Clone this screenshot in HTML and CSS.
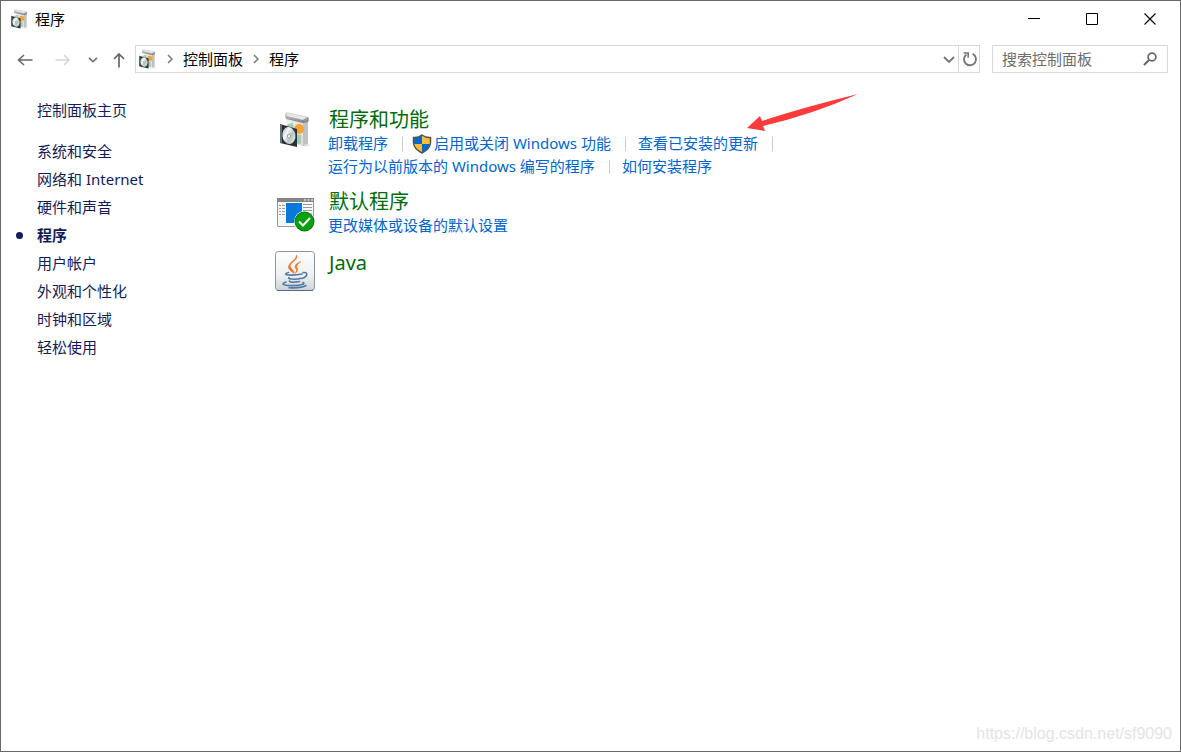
FILE: index.html
```html
<!DOCTYPE html>
<html lang="zh-CN">
<head>
<meta charset="utf-8">
<title>程序</title>
<link rel="stylesheet" href="styles.css">
</head>
<body>
<svg class="defs" aria-hidden="true">
  <defs>
    <linearGradient id="disc" x1="0" y1="0" x2="1" y2="1"><stop offset="0" stop-color="#a9b3b3"/><stop offset=".35" stop-color="#f6f8f8"/><stop offset=".6" stop-color="#bcc5c4"/><stop offset="1" stop-color="#eef1f0"/></linearGradient>
    <linearGradient id="box" x1="0" y1="0" x2="1" y2="0"><stop offset="0" stop-color="#f4f4f4"/><stop offset="1" stop-color="#dcdddd"/></linearGradient>
    <linearGradient id="lid" x1="0" y1="0" x2="0" y2="1"><stop offset="0" stop-color="#e2e2e3"/><stop offset="1" stop-color="#77797b"/></linearGradient>
    <linearGradient id="tile" x1="0" y1="0" x2="0" y2="1"><stop offset="0" stop-color="#fdfdfd"/><stop offset=".6" stop-color="#eff1f2"/><stop offset="1" stop-color="#cdd3d9"/></linearGradient>
    <symbol id="programs" viewBox="0 0 32 36">
      <path d="M6 5 23 9V34L6 30Z" fill="url(#box)"/>
      <path d="M23 9 28 8V32L23 34Z" fill="#bfc1c2"/>
      <path d="M25 32 31 33 24 35Z" fill="#dedede"/>
      <path d="M5 4Q5 1 7 0L28 5Q30 7 28 10L23 11 6 7Z" fill="url(#lid)"/>
      <path d="M7 1 27 5 23 8 7 4Z" fill="#e6e6e7"/>
      <path d="M13 11Q6 11 6 17L14 20Z" fill="#a5cbb2"/>
      <circle cx="19" cy="17" r="5" fill="#f5a535"/>
      <path d="M11 22 21 23V32L13 31Z" fill="#a5cbb2"/>
      <path d="M0 12 17 17V35L0 31Z" fill="#28323a"/>
      <path d="M0 12 2 13V31L0 31Z" fill="#65717a"/>
      <ellipse cx="9" cy="23.500" rx="6.500" ry="8.500" fill="url(#disc)" transform="rotate(-8 9 24)"/>
      <ellipse cx="9" cy="24" rx="2" ry="2.500" fill="#9aa4a8"/>
      <ellipse cx="9" cy="24" rx="1" ry="1.500" fill="#f7f8f8"/>
    </symbol>
  </defs>
</svg>
<div class="window">
  <header class="titlebar">
    <svg class="icon-small"><use href="#programs"/></svg>
    <h1 class="title">程序</h1>
    <div class="controls">
      <button class="control" aria-label="最小化"><svg width="12" height="12"><path d="M0 5.500H12" stroke="#000"/></svg></button>
      <button class="control" aria-label="最大化"><svg width="12" height="12"><path d="M.5.5H11.500V11.500H.5Z" stroke="#000" fill="none"/></svg></button>
      <button class="control" aria-label="关闭"><svg width="12" height="12"><path d="M.5.5 11.500 11.500M11.500.5.5 11.500" stroke="#000" stroke-width="1.100"/></svg></button>
    </div>
  </header>
  <nav class="navbar" aria-label="导航">
    <div class="history">
      <button class="nav-button" aria-label="后退"><svg width="16" height="12"><path d="M15.500 6H1.500M7 1 1.500 6 7 11" fill="none" stroke="#666" stroke-width="1.600"/></svg></button>
      <button class="nav-button" aria-label="前进" disabled><svg width="16" height="12"><path d="M.5 6H14M9 1 14 6 9 11" fill="none" stroke="#d6d6d6" stroke-width="1.600"/></svg></button>
      <button class="nav-button recent" aria-label="最近"><svg width="10" height="6"><path d="M1 .8 5 4.600 9 .8" fill="none" stroke="#777" stroke-width="1.700"/></svg></button>
      <button class="nav-button up" aria-label="向上"><svg width="12" height="16"><path d="M6 15.500V2M1 7 6 2 11 7" fill="none" stroke="#666" stroke-width="1.700"/></svg></button>
    </div>
    <div class="address">
      <svg class="icon-small"><use href="#programs"/></svg>
      <svg class="chevron" width="6" height="10"><path d="M1 1 5 5 1 9" fill="none" stroke="#777" stroke-width="1.500"/></svg>
      <a class="crumb" href="#">控制面板</a>
      <svg class="chevron" width="6" height="10"><path d="M1 1 5 5 1 9" fill="none" stroke="#777" stroke-width="1.500"/></svg>
      <a class="crumb" href="#">程序</a>
      <button class="drop" aria-label="历史地址"><svg width="12" height="8"><path d="M1 1 6 6 11 1" fill="none" stroke="#777" stroke-width="1.900"/></svg></button>
      <button class="refresh" aria-label="刷新"><svg width="16" height="16"><path d="M10.600 2.900A6 6 0 1 1 4.300 3.600" fill="none" stroke="#777" stroke-width="1.900"/><path d="M1.500 2H6.200V6.700" fill="none" stroke="#777" stroke-width="1.700"/></svg></button>
    </div>
    <label class="search">
      <input class="search-input" type="search" placeholder="搜索控制面板" aria-label="搜索控制面板">
      <svg width="14" height="14"><circle cx="9" cy="5" r="3.900" fill="none" stroke="#666" stroke-width="1.700"/><path d="M6.100 8 1 13" stroke="#666" stroke-width="2.100"/></svg>
    </label>
  </nav>
  <div class="body">
    <aside class="sidebar">
      <a class="side-link home" href="#">控制面板主页</a>
      <a class="side-link" href="#">系统和安全</a>
      <a class="side-link" href="#">网络和 Internet</a>
      <a class="side-link" href="#">硬件和声音</a>
      <a class="side-link current" href="#" aria-current="page">程序</a>
      <a class="side-link" href="#">用户帐户</a>
      <a class="side-link" href="#">外观和个性化</a>
      <a class="side-link" href="#">时钟和区域</a>
      <a class="side-link" href="#">轻松使用</a>
    </aside>
    <main class="content">
      <section class="category">
        <div class="picture"><svg width="32" height="36"><use href="#programs"/></svg></div>
        <div class="details">
          <h2 class="heading"><a href="#">程序和功能</a></h2>
          <ul class="tasks">
            <li class="task divided"><a href="#">卸载程序</a></li>
            <li class="task divided">
              <svg class="shield" width="20" height="20" viewBox="0 0 20 20"><defs><clipPath id="shield-clip"><path d="M10 1Q6 4 2 3.500V9Q2 15 10 19Q18 15 18 9V3.500Q14 4 10 1Z"/></clipPath></defs><g clip-path="url(#shield-clip)"><path d="M0 0H10V10H0ZM10 10H20V20H10Z" fill="#0868c9"/><path d="M10 0H20V10H10ZM0 10H10V20H0Z" fill="#fdbd38"/></g><path d="M10 1Q6 4 1.500 3.500V9Q2 15 10 19Q18 15 18.500 9V3.500Q14 4 10 1Z" fill="none" stroke="#505458" stroke-width="1.500"/></svg>
              <a href="#">启用或关闭 Windows 功能</a>
            </li>
            <li class="task divided">
              <a href="#">查看已安装的更新</a>
              <svg class="arrow" width="114" height="40" aria-hidden="true"><path d="M1 36 14 24 16 29Q55 16 112 2Q68 22 17 34L19 39Z" fill="#fb3b3a"/></svg>
            </li>
            <li class="task divided"><a href="#">运行为以前版本的 Windows 编写的程序</a></li>
            <li class="task"><a href="#">如何安装程序</a></li>
          </ul>
        </div>
      </section>
      <section class="category">
        <div class="picture picture-low"><svg width="38" height="34" viewBox="0 0 38 34"><path d="M.5.5H36.500V28.500H.5Z" fill="#f7f7f7" stroke="#999"/><path d="M0 0H37V4H0Z" fill="#858585"/><path d="M27 2H29M30.500 2H32.500M34 2H36" stroke="#fff"/><path d="M2 7.500H8M2 10.500H8M2 13.500H8M2 16.500H8" stroke="#999" stroke-dasharray="2 1 3 0"/><path d="M9 5H25V25H9Z" fill="#0878d9"/><path d="M26 6.500H35M26 9.500H35M26 12.500H35M26 15.500H35" stroke="#999"/><circle cx="27.500" cy="23.500" r="10.500" fill="#fff"/><circle cx="27.500" cy="23.500" r="10" fill="#087d13"/><circle cx="27.500" cy="23.500" r="9" fill="#0aa00d"/><path d="M22 23.500 26 27.500 33 20" fill="none" stroke="#fff" stroke-width="2"/></svg></div>
        <div class="details">
          <h2 class="heading"><a href="#">默认程序</a></h2>
          <ul class="tasks"><li class="task"><a href="#">更改媒体或设备的默认设置</a></li></ul>
        </div>
      </section>
      <section class="category">
        <div class="picture picture-flush"><svg width="40" height="40" viewBox="0 0 40 40"><rect x=".5" y=".5" width="39" height="39" rx="3" fill="url(#tile)" stroke="#8995a2"/><path d="M2 39.500H38" stroke="#536b84"/><path d="M21.500 4C24.500 9 13.500 12 15.500 16C17 19 20 20 19 22.500C16 20 12 18 14 14C16 10 21 9 21.500 4ZM26 10.500C20 13 19 15 21 18C22 20 21 21 20 22.500C25 19 21.500 17 21.700 15.500Q22 13 26 10.500Z" fill="#e8752c" stroke="#e8752c" stroke-width=".5"/><g fill="none" stroke="#527a9f" stroke-width="1.600" stroke-linecap="round"><path d="M13.500 21.500Q8 23 13 24Q21 24.500 27 23M28 21.500Q33 21 31.500 24.500Q30 27 27 27.500M14 26.500Q12.500 28 19 28.200Q23 28 26 27.200M14.500 30Q15 32.200 24.500 30.500M11 31Q4 33.500 13 34.500Q24 35 28.500 33Q29.500 32 28 31.500M14 36.700Q26 37.500 31 34.500"/></g></svg></div>
        <div class="details"><h2 class="heading"><a href="#">Java</a></h2></div>
      </section>
    </main>
  </div>
  <footer class="watermark">https://blog.csdn.net/sf9090</footer>
</div>
</body>
</html>
```

FILE: styles.css
```css
* { box-sizing: border-box; }
body {
  margin: 0;
  font: 15px/20px "Noto Sans", "Noto Sans CJK SC", sans-serif;
  color: #000;
  background: #fff;
}
a { color: inherit; text-decoration: none; }
a:hover { text-decoration: underline; }
button { padding: 0; border: 0; background: none; font: inherit; }
svg { display: block; flex: none; }
.defs { position: absolute; width: 0; height: 0; }

.window {
  display: flex;
  flex-direction: column;
  min-height: 100vh;
  border: 1px solid #6b6869;
}
.titlebar { display: flex; align-items: center; height: 36px; padding: 0 1px 0 10px; }
.title { margin: 0 0 0 6px; font-size: 15px; font-weight: 400; }
.icon-small { width: 18px; height: 20px; }
.controls { display: flex; margin-left: auto; }
.control { display: flex; align-items: center; justify-content: center; width: 58px; height: 36px; }

.navbar { display: flex; align-items: center; gap: 12px; padding: 8px 12px 0 16px; }
.history { display: flex; align-items: center; width: 106px; padding-top: 2px; }
.nav-button { display: flex; align-items: center; }
.nav-button + .nav-button { margin-left: 22px; }
.nav-button + .recent { margin-left: 17px; }
.nav-button + .up { margin-left: 15px; }
.address {
  display: flex;
  align-items: center;
  flex: 1;
  height: 28px;
  padding-left: 3px;
  border: 1px solid #d9d9d9;
}
.chevron { margin: 0 10px; }
.crumb { white-space: nowrap; }
.drop { margin-left: auto; padding: 2px 3px 0; }
.refresh { display: flex; align-items: center; height: 26px; padding: 0 1px 0 3px; border-left: 1px solid #d9d9d9; }
.search {
  display: flex;
  align-items: center;
  width: 176px;
  height: 28px;
  padding: 0 10px 0 9px;
  border: 1px solid #d9d9d9;
}
.search-input { flex: 1; min-width: 0; padding: 0; border: 0; outline: 0; font: inherit; color: #6d6d6d; background: none; }
.search-input::placeholder { color: #6d6d6d; opacity: 1; }

.body { display: flex; flex: 1; padding-top: 23px; }
.sidebar { display: flex; flex-direction: column; width: 274px; padding: 0 12px 0 36px; color: #151c55; line-height: 28px; }
.home { margin-bottom: 13px; }
.current { display: flex; align-items: center; font-weight: 700; }
.current::before { content: ""; width: 7px; height: 7px; margin: 0 14px 0 -21px; border-radius: 50%; background: #151c55; }

.content { display: flex; flex: 1; flex-direction: column; gap: 12px; min-width: 0; padding-top: 12px; }
.category { display: flex; gap: 13px; min-height: 49px; }
.picture { display: flex; justify-content: center; flex: none; width: 40px; padding: 4px 0 0 2px; }
.picture-low { padding-top: 8px; }
.picture-flush { padding: 0; }
.heading { margin: 0; padding-left: 1px; font-size: 20px; font-weight: 400; line-height: 24px; color: #006b0c; }
.tasks { display: flex; flex-wrap: wrap; max-width: 460px; margin: 0; padding: 0; list-style: none; line-height: 23px; color: #0066cc; }
.task { display: flex; align-items: center; position: relative; white-space: nowrap; }
.divided::after { content: ""; width: 1px; height: 14px; margin: 0 12px 0 14px; background: #ccc; }
.shield { margin: 0 2px 0 -3px; }
.arrow { position: absolute; left: 108px; bottom: 23px; }
.watermark { align-self: flex-end; padding: 0 8px 7px; font: 16px/20px "Liberation Sans", Arial, sans-serif; color: #e4e4e4; }
```
